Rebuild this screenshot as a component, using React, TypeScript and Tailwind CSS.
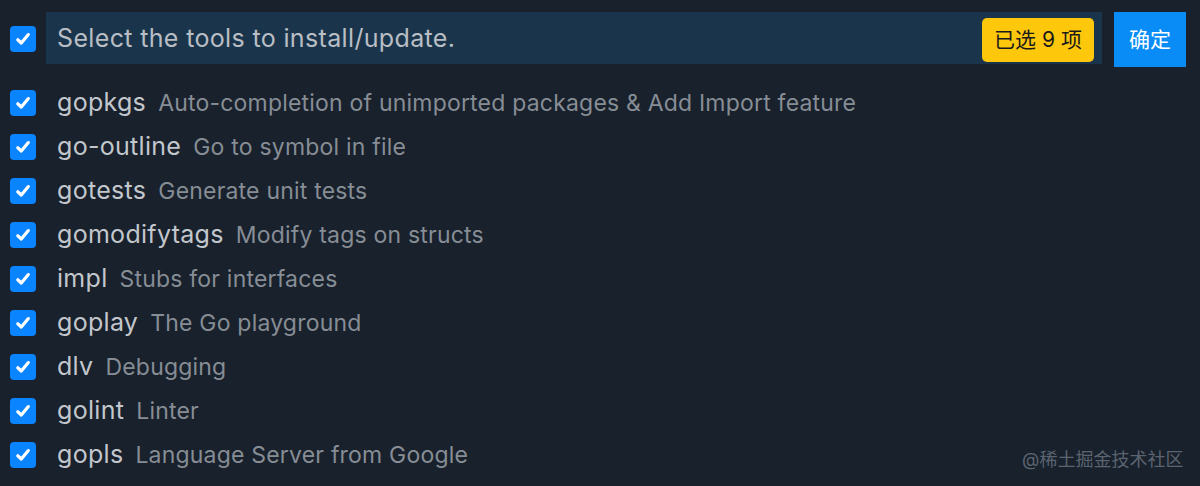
import React from "react";

const items: [string, string][] = [
  ["gopkgs", "Auto-completion of unimported packages & Add Import feature"],
  ["go-outline", "Go to symbol in file"],
  ["gotests", "Generate unit tests"],
  ["gomodifytags", "Modify tags on structs"],
  ["impl", "Stubs for interfaces"],
  ["goplay", "The Go playground"],
  ["dlv", "Debugging"],
  ["golint", "Linter"],
  ["gopls", "Language Server from Google"],
];

function Check() {
  return (
    <div className="w-[26px] h-[26px] rounded-[4px] bg-[#0b84ff] flex items-center justify-center shrink-0">
      <svg width="18" height="18" viewBox="0 0 18 18">
        <path d="M3.8 9.8 L7.3 13 L14.3 4.6" fill="none" stroke="white" strokeWidth="3.2" strokeLinecap="round" strokeLinejoin="round" />
      </svg>
    </div>
  );
}

export default function App() {
  return (
    <div
      className="w-[1200px] h-[486px] bg-[#18212c] relative overflow-hidden"
      style={{ fontFamily: "Inter, 'Noto Sans CJK SC', sans-serif" }}
    >
      <div className="flex items-start pt-[12px] pl-[10px]">
        <div className="mt-[14px]">
          <Check />
        </div>
        <div className="ml-[10px] w-[1056px] h-[52px] bg-[#1a354b] flex items-center justify-between pl-[11px] pr-[8px]">
          <span className="text-[25px] tracking-[0.35px] text-[#b9bec4] mt-[2px]">Select the tools to install/update.</span>
          <span className="bg-[#fdc70c] rounded-[5px] h-[44px] w-[112px] mt-[4px] flex items-center justify-center text-[21px] text-[#1a1a1a]">已选 9 项</span>
        </div>
        <div className="ml-[12px] w-[72px] h-[55px] bg-[#0a8cf7] flex items-center justify-center text-[21px] text-white">确定</div>
      </div>
      <div className="flex flex-col pt-[14px]">
        {items.map(([n, d]) => (
          <div key={n} className="flex items-center h-[44px] pl-[10px]">
            <Check />
            <span className="ml-[21px] text-[25px] tracking-[0.3px] text-[#c3c7cc]">{n}</span>
            <span className="ml-[12px] text-[23px] tracking-[0.2px] text-[#878d95]">{d}</span>
          </div>
        ))}
      </div>
      <div className="absolute left-[1022px] top-[446px] text-[18px] text-[#5b6470]">@稀土掘金技术社区</div>
    </div>
  );
}
